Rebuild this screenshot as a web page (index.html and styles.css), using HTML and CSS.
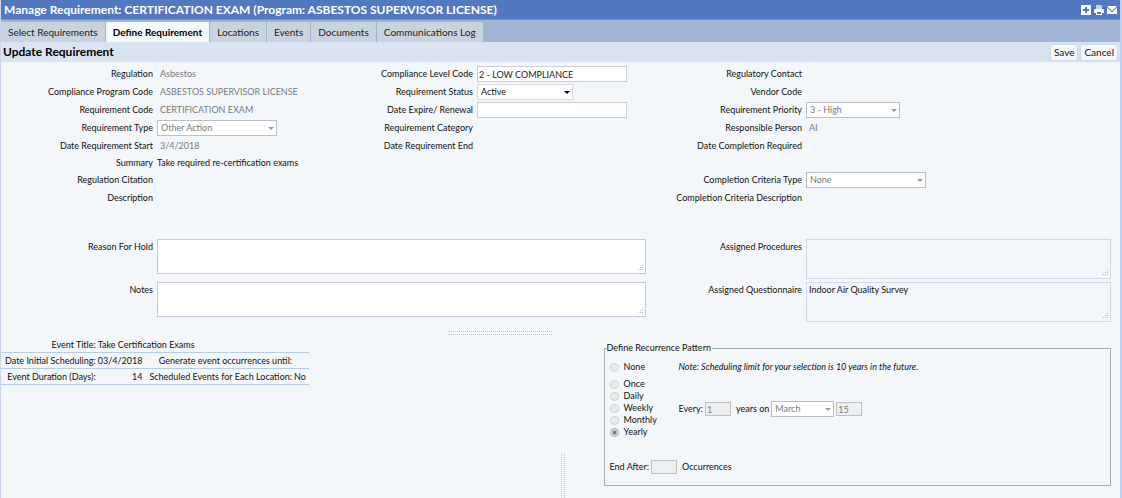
FILE: index.html
```html
<!DOCTYPE html>
<html lang="en">
<head>
<meta charset="utf-8">
<meta name="viewport" content="width=device-width, initial-scale=1">
<title>Manage Requirement</title>
<link rel="stylesheet" href="styles.css">
</head>
<body>
<div class="app">
  <header class="titlebar">
    <h1 class="titlebar-text">Manage Requirement: CERTIFICATION EXAM (Program: ASBESTOS SUPERVISOR LICENSE)</h1>
    <div class="tools">
      <button type="button" class="tool" aria-label="Add"><svg viewBox="0 0 10 10" width="10" height="10"><path fill="#fff" fill-rule="evenodd" d="M0 0H10V10H0ZM4 2V4H2V6H4V8H6V6H8V4H6V2Z"/></svg></button>
      <button type="button" class="tool" aria-label="Print"><svg viewBox="0 0 10 10" width="10" height="10"><path fill="#c4d1ea" d="M2 0H7L8 1V4H2Z"/><path fill="#fff" fill-rule="evenodd" d="M1 4H9L10 5V8H8V10H2V8H0V5ZM3 7V9H7V7Z"/></svg></button>
      <button type="button" class="tool" aria-label="Mail"><svg viewBox="0 0 10 10" width="10" height="10"><path fill="#fff" d="M0 1H10L5 6ZM0 2.5L5 7.5L10 2.5V9H0Z"/></svg></button>
    </div>
  </header>
  <nav class="tabs">
    <a class="tab" href="#select">Select Requirements</a>
    <a class="tab tab-active" href="#define" aria-current="page">Define Requirement</a>
    <a class="tab" href="#locations">Locations</a>
    <a class="tab" href="#events">Events</a>
    <a class="tab" href="#documents">Documents</a>
    <a class="tab" href="#log">Communications Log</a>
  </nav>
  <div class="subbar">
    <h2 class="subbar-title">Update Requirement</h2>
    <div class="actions">
      <button type="button" class="btn">Save</button>
      <button type="button" class="btn">Cancel</button>
    </div>
  </div>

  <main class="content">
    <form class="details main-fields">
      <span class="label">Regulation</span><span class="value">Asbestos</span>
      <label class="label" for="level">Compliance Level Code</label><input class="field" id="level" type="text" value="2 - LOW COMPLIANCE">
      <span class="label">Regulatory Contact</span><span class="value"></span>

      <span class="label">Compliance Program Code</span><span class="value">ASBESTOS SUPERVISOR LICENSE</span>
      <label class="label" for="status">Requirement Status</label><span class="select select-status"><select id="status"><option>Active</option></select></span>
      <span class="label">Vendor Code</span><span class="value"></span>

      <span class="label">Requirement Code</span><span class="value">CERTIFICATION EXAM</span>
      <label class="label" for="expire">Date Expire/ Renewal</label><input class="field" id="expire" type="text">
      <label class="label" for="priority">Requirement Priority</label><span class="select select-priority"><select id="priority" disabled><option>3 - High</option></select></span>

      <label class="label" for="type">Requirement Type</label><span class="select select-wide"><select id="type" disabled><option>Other Action</option></select></span>
      <span class="label">Requirement Category</span><span class="value"></span>
      <span class="label">Responsible Person</span><span class="value">AI</span>

      <span class="label">Date Requirement Start</span><span class="value">3/4/2018</span>
      <span class="label">Date Requirement End</span><span class="value"></span>
      <span class="label">Date Completion Required</span><span class="value"></span>

      <span class="label first">Summary</span><span class="summary">Take required re-certification exams</span>

      <span class="label first">Regulation Citation</span>
      <label class="label third" for="criteria">Completion Criteria Type</label><span class="select select-wide"><select id="criteria" disabled><option>None</option></select></span>

      <span class="label first">Description</span>
      <span class="label third">Completion Criteria Description</span>
    </form>

    <form class="details notes">
      <label class="label" for="hold">Reason For Hold</label><textarea class="area" id="hold"></textarea>
      <label class="label third" for="procedures">Assigned Procedures</label><textarea class="area area-readonly" id="procedures" readonly></textarea>
      <label class="label" for="notes">Notes</label><textarea class="area" id="notes"></textarea>
      <label class="label third" for="questionnaire">Assigned Questionnaire</label><textarea class="area area-readonly" id="questionnaire" readonly>Indoor Air Quality Survey</textarea>
    </form>

    <div class="splitter"></div>

    <section class="schedule">
      <table class="events">
        <tbody>
          <tr><th scope="row">Event Title:</th><td colspan="3">Take Certification Exams</td></tr>
          <tr><th scope="row">Date Initial Scheduling:</th><td>03/4/2018</td><th scope="row">Generate event occurrences until:</th><td></td></tr>
          <tr><th scope="row">Event Duration (Days):</th><td class="number">14</td><th scope="row">Scheduled Events for Each Location:</th><td>No</td></tr>
        </tbody>
      </table>
      <div class="splitter-vertical"></div>
      <fieldset class="recurrence">
        <legend>Define Recurrence Pattern</legend>
        <div class="pattern">
          <div class="choices">
            <label class="choice choice-none"><input type="radio" name="pattern" disabled>None</label>
            <label class="choice"><input type="radio" name="pattern" disabled>Once</label>
            <label class="choice"><input type="radio" name="pattern" disabled>Daily</label>
            <label class="choice"><input type="radio" name="pattern" disabled>Weekly</label>
            <label class="choice"><input type="radio" name="pattern" disabled>Monthly</label>
            <label class="choice"><input type="radio" name="pattern" disabled checked>Yearly</label>
          </div>
          <div class="settings">
            <p class="hint">Note: Scheduling limit for your selection is 10 years in the future.</p>
            <div class="every">
              <label for="every">Every:</label>
              <input class="mini" id="every" type="text" value="1" disabled>
              <label class="years" for="month">years on</label>
              <span class="select select-month"><select id="month" disabled><option>March</option></select></span>
              <input class="mini" type="text" value="15" aria-label="Day" disabled>
            </div>
          </div>
        </div>
        <div class="end">
          <label for="end">End After:</label>
          <input class="mini" id="end" type="text" disabled>
          <span class="years">Occurrences</span>
        </div>
      </fieldset>
    </section>
  </main>
</div>
</body>
</html>
```

FILE: styles.css
```css
* { box-sizing: border-box; }

body {
  margin: 0;
  background: #f3f7fa;
  color: #111;
  font: 9px/12px Lato, "Noto Sans", sans-serif;
}

input, select, textarea, button { font: inherit; color: inherit; margin: 0; }

.app {
  display: flex;
  flex-direction: column;
  min-height: 100vh;
  border-left: 1px solid #c9d5ea;
  border-right: 2px solid #bdd0f0;
}

.titlebar {
  display: flex;
  align-items: center;
  justify-content: space-between;
  height: 20px;
  padding: 0 3px;
  background: #5279c0;
  border-bottom: 1px solid #7391c8;
  color: #fff;
}
.titlebar-text { margin: 0; font-size: 12px; line-height: 19px; font-weight: 700; }
.tools { display: flex; gap: 3px; }
.tool { display: flex; padding: 0; border: 0; background: none; }

.tabs { display: flex; height: 22px; padding-top: 2px; background: #a2b4d3; gap: 1px; }
.tab {
  display: flex;
  align-items: center;
  padding: 0 7px;
  background: #c9d3de;
  color: #222;
  font-size: 10px;
  text-decoration: none;
}
.tab-active { background: #f6f9fc; color: #000; font-weight: 700; }

.subbar {
  display: flex;
  align-items: center;
  justify-content: space-between;
  height: 20px;
  padding: 0 3px 0 2px;
  background: #dae3f2;
}
.subbar-title { margin: 0; font-size: 12px; line-height: 20px; color: #000; }
.actions { display: flex; gap: 4px; }
.btn {
  height: 15px;
  padding: 0 3px;
  border: 0;
  border-radius: 2px;
  background: #f5f7fb;
  box-shadow: 0 0 2px #b9c3d4;
  font-size: 10px;
  line-height: 15px;
}

.content { flex: 1; display: flex; flex-direction: column; padding: 4px 0 0; }

.details {
  display: grid;
  grid-template-columns: 152fr 163fr 149fr 169fr 152fr 305fr;
  gap: 2px 4px;
  align-items: center;
  padding-right: 9px;
}
.main-fields { grid-template-rows: repeat(5, 16px) 14px 16px 16px; }
.label { text-align: right; white-space: nowrap; justify-self: end; }
.first { grid-column: 1; }
.third { grid-column: 5; }
.value { padding-left: 3px; color: #7a7a7a; white-space: nowrap; }
.summary { white-space: nowrap; }

.field {
  width: 150px;
  height: 16px;
  padding: 0 1px;
  border: 1px solid #cdcdd9;
  background: #fff;
  color: #222;
}

.select { position: relative; display: inline-flex; height: 16px; }
.select select {
  width: 100%;
  height: 16px;
  padding: 0 3px;
  border: 1px solid #bdbdc2;
  border-radius: 0;
  background: #fff;
  appearance: none;
  color: #111;
}
.select select:disabled { color: #7a7a7a; opacity: 1; }
.select::after {
  content: "";
  position: absolute;
  right: 3px;
  top: 7px;
  border: 3px solid transparent;
  border-top-color: #999;
  border-bottom: 0;
  pointer-events: none;
}
.select-status { width: 96px; }
.select-status select { border-color: #dadae4; }
.select-status::after { border-top-color: #000; }
.select-priority { width: 94px; }
.select-wide { width: 120px; }
.select-month { width: 63px; }

.notes { margin-top: 33px; row-gap: 3px; align-items: start; }
.notes .label { padding-top: 2px; }
.notes .area { width: 100%; }
.area {
  display: block;
  grid-column: 2 / 5;
  height: 35px;
  padding: 1px 2px;
  border: 1px solid #c9c9d8;
  background: #fff;
  resize: both;
}
.area-readonly {
  grid-column: 6;
  height: 40px;
  border-color: #d3dae6;
  background: #f3f6fb;
}
.area::-webkit-resizer {
  background: url("data:image/svg+xml,%3Csvg xmlns='http://www.w3.org/2000/svg' width='8' height='8'%3E%3Cpath fill='%23b8b8b8' d='M5 0h1v1H5zM3 2h1v1H3zM5 2h1v1H5zM1 4h1v1H1zM3 4h1v1H3zM5 4h1v1H5z'/%3E%3C/svg%3E") no-repeat right bottom;
}

.splitter {
  align-self: center;
  width: 104px;
  height: 4px;
  margin-top: 9px;
  margin-right: 122px;
  border-top: 1px dotted #c4c8cd;
  border-bottom: 1px dotted #c4c8cd;
}

.schedule {
  flex: 1;
  display: grid;
  grid-template-columns: 559fr 4px 39fr 507fr;
  padding: 2px 9px 0 0;
  align-items: start;
}
.splitter-vertical {
  align-self: end;
  height: 45px;
  border-left: 1px dotted #c4c8cd;
  border-right: 1px dotted #c4c8cd;
}

.events { justify-self: start; border-collapse: collapse; white-space: nowrap; }
.events tr { border-bottom: 1px solid #b9cce6; }
.events th { padding: 2px 0 1px 4px; font-weight: 400; text-align: right; }
.events td { padding: 2px 3px 1px 2px; }
.events .number { text-align: right; }

.recurrence {
  grid-column: 4;
  min-width: 0;
  margin: 5px 0 0;
  padding: 7px 5px 11px;
  border: 1px solid #a9adb1;
}
.recurrence legend { margin-left: -3px; padding: 0 1px 0 0; }
.pattern { display: flex; gap: 22px; }
.choices { display: flex; flex-direction: column; width: 47px; }
.choice { display: flex; align-items: center; gap: 5px; height: 12px; white-space: nowrap; }
.choice-none { margin-bottom: 5px; }
.choice input {
  flex: none;
  width: 9px;
  height: 9px;
  margin: 0;
  appearance: none;
  border: 1px solid #cfcfcf;
  border-radius: 50%;
  background: #ececec;
}
.choice input:checked {
  border-color: #aaa;
  background: radial-gradient(circle, #777 0 1px, #e6e6e6 3px);
}
.hint { margin: 0; font-style: italic; line-height: 12px; color: #111; }
.every { display: flex; align-items: center; gap: 2px; margin-top: 28px; white-space: nowrap; }
.years { margin: 0 0 0 3px; }
.mini {
  width: 26px;
  height: 14px;
  padding: 0 1px;
  border: 1px solid #bfbfbf;
  background: #eeeff0;
  color: #7a7a7a;
}
.end { display: flex; align-items: center; gap: 2px; margin-top: 22px; }
```
